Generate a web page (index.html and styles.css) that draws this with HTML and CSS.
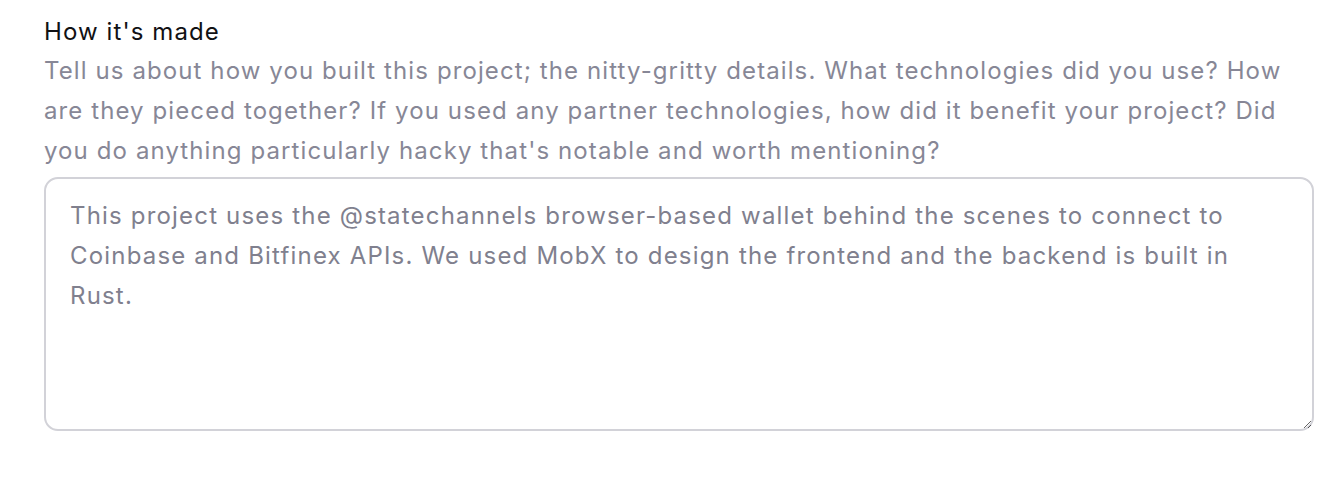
FILE: index.html
```html
<!DOCTYPE html>
<html>
<head>
<meta charset="utf-8">
<link rel="stylesheet" href="styles.css">
</head>
<body>
<div class="field">
  <label class="field-label" for="made">How it's made</label>
  <p class="field-help">Tell us about how you built this project; the nitty-gritty details. What technologies did you use? How are they pieced together? If you used any partner technologies, how did it benefit your project? Did you do anything particularly hacky that's notable and worth mentioning?</p>
  <textarea id="made" class="field-input">This project uses the @statechannels browser-based wallet behind the scenes to connect to Coinbase and Bitfinex APIs. We used MobX to design the frontend and the backend is built in Rust.</textarea>
</div>
</body>
</html>
```
FILE: styles.css
```css
html, body {
  margin: 0;
  padding: 0;
  background: #ffffff;
}
body {
  font-family: Inter, "Noto Sans", sans-serif;
}
.field {
  display: flex;
  flex-direction: column;
  width: 1270px;
  padding: 13px 0 0 44px;
}
.field-label {
  font-size: 24px;
  line-height: 38px;
  letter-spacing: 1.1px;
  color: #111114;
}
.field-help {
  margin: 0;
  font-size: 24px;
  line-height: 40px;
  letter-spacing: 1.1px;
  color: #878796;
}
.field-input {
  box-sizing: border-box;
  margin-top: 6px;
  width: 1270px;
  height: 254px;
  padding: 17px 24px;
  border: 2px solid #d2d2d8;
  border-radius: 14px;
  font-family: inherit;
  font-size: 24px;
  line-height: 40px;
  letter-spacing: 1.18px;
  color: #80808e;
  background: #fff;
  outline: none;
}
```
